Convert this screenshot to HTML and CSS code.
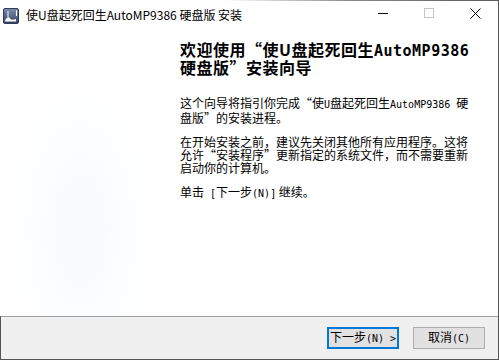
FILE: index.html
```html
<!DOCTYPE html>
<html lang="zh-CN">
<head>
    <meta charset="UTF-8">
    <title>使U盘起死回生AutoMP9386 硬盘版 安装</title>
    <link rel="stylesheet" href="styles.css">
</head>
<body>
    <div class="window">
        <!-- 标题栏 -->
        <div class="titlebar">
            <svg class="app-icon" width="16" height="16" viewBox="0 0 16 16">
                <defs>
                    <linearGradient id="ig" x1="0" y1="0" x2="0" y2="1">
                        <stop offset="0" stop-color="#7d8fab"/>
                        <stop offset="1" stop-color="#34435f"/>
                    </linearGradient>
                </defs>
                <rect x="0.5" y="0.5" width="15" height="15" rx="1.5" fill="url(#ig)" stroke="#2f3b55"/>
                <path d="M2 12.5 C4 9, 6 8.5, 7 10.5 C8 12, 10 12, 13 11 L13 13.5 L2 13.5 Z" fill="#fff"/>
                <path d="M5 3 L5 9" stroke="#dfe6f0" stroke-width="1.2"/>
                <path d="M13.5 2.5 L13.5 8" stroke="#fff" stroke-width="1"/>
            </svg>
            <div class="title">使U盘起死回生AutoMP9386 硬盘版 安装</div>
            <div class="caption">
                <div class="cbtn">
                    <svg width="10" height="10" viewBox="0 0 10 10"><path d="M0 5.5 H10" stroke="#000" stroke-width="1"/></svg>
                </div>
                <div class="cbtn">
                    <svg width="10" height="10" viewBox="0 0 10 10"><rect x="0.5" y="0.5" width="9" height="9" fill="none" stroke="#c4c4c4" stroke-width="1"/></svg>
                </div>
                <div class="cbtn">
                    <svg width="11" height="11" viewBox="0 0 11 11"><path d="M0.5 0.5 L10.5 10.5 M10.5 0.5 L0.5 10.5" stroke="#000" stroke-width="1"/></svg>
                </div>
            </div>
        </div>

        <!-- 欢迎页 -->
        <div class="page">
            <div class="side"></div>
            <div class="content">
                <h1>欢迎使用“使U盘起死回生<span class="en">AutoMP9386</span><br>硬盘版”安装向导</h1>
                <p>这个向导将指引你完成“使<span class="en">U</span>盘起死回生<span class="en">AutoMP9386 </span>硬<br>盘版”的安装进程。</p>
                <p>在开始安装之前，建议先关闭其他所有应用程序。这将<br>允许“安装程序”更新指定的系统文件，而不需要重新<br>启动你的计算机。</p>
                <p>单击<span class="en"> [</span>下一步<span class="en">(N)]</span> 继续。</p>
            </div>
        </div>

        <!-- 底部按钮 -->
        <div class="footer">
            <button class="btn btn-default">下一步<span class="en">(N) &gt;</span></button>
            <button class="btn">取消<span class="en">(C)</span></button>
        </div>
    </div>
</body>
</html>
```

FILE: styles.css
```css
* {
    box-sizing: border-box;
}

body {
    margin: 0;
    background: #fff;
    font-family: "Noto Sans CJK SC", "Noto Sans", sans-serif;
    color: #000;
}

.window {
    width: 499px;
    height: 360px;
    border-right: 1px solid #555;
    border-bottom: 1px solid #555;
    display: flex;
    flex-direction: column;
    overflow: hidden;
}

/* 标题栏 */
.titlebar {
    height: 31px;
    display: flex;
    align-items: center;
    border-top: 1px solid;
    border-image: linear-gradient(to right, #fff 45%, #8a8a8a 70%, #5a5a5a) 1;
}

.app-icon {
    margin: 0 7px 0 3px;
    flex: none;
}

.title {
    font-size: 12px;
    line-height: 16px;
    margin-top: -3px;
    white-space: nowrap;
}

.caption {
    margin-left: auto;
    display: flex;
    align-self: flex-start;
    margin-top: -1px;
}

.cbtn {
    width: 46px;
    height: 29px;
    display: flex;
    align-items: center;
    justify-content: center;
    padding-bottom: 3px;
}

/* 内容 */
.page {
    height: 285px;
    display: flex;
}

.side {
    width: 180px;
    flex: none;
    background:
        radial-gradient(ellipse at 45% 70%, rgba(232, 242, 250, 0.35), rgba(255, 255, 255, 0) 55%);
}

.content {
    padding-top: 10px;
    white-space: nowrap;
}

.en {
    font-family: "DejaVu Sans Mono", "Liberation Mono", monospace;
}

h1 {
    margin: 0 0 21px;
    font-size: 16px;
    line-height: 16px;
    font-weight: 700;
    letter-spacing: 0.5px;
}

h1 .en {
    font-size: 15px;
}

p {
    margin: 0 0 11px;
    font-size: 12px;
    line-height: 13px;
}

p .en {
    font-size: 10px;
}

/* 底部按钮 */
.footer {
    height: 43px;
    border-top: 1px solid #a0a0a0;
    border-left: 1px solid #555;
    background: #f0f0f0;
    display: flex;
    justify-content: flex-end;
    align-items: flex-start;
    gap: 14px;
    padding: 10px 13px 0 0;
}

.btn {
    width: 72px;
    height: 22px;
    padding: 0;
    margin: 0;
    font-family: "Noto Sans CJK SC", sans-serif;
    font-size: 12px;
    line-height: 12px;
    color: #000;
    background: #e1e1e1;
    border: 1px solid #adadad;
}

.btn .en {
    font-size: 10px;
}

.btn-default {
    border: 2px solid #0078d7;
}
```
